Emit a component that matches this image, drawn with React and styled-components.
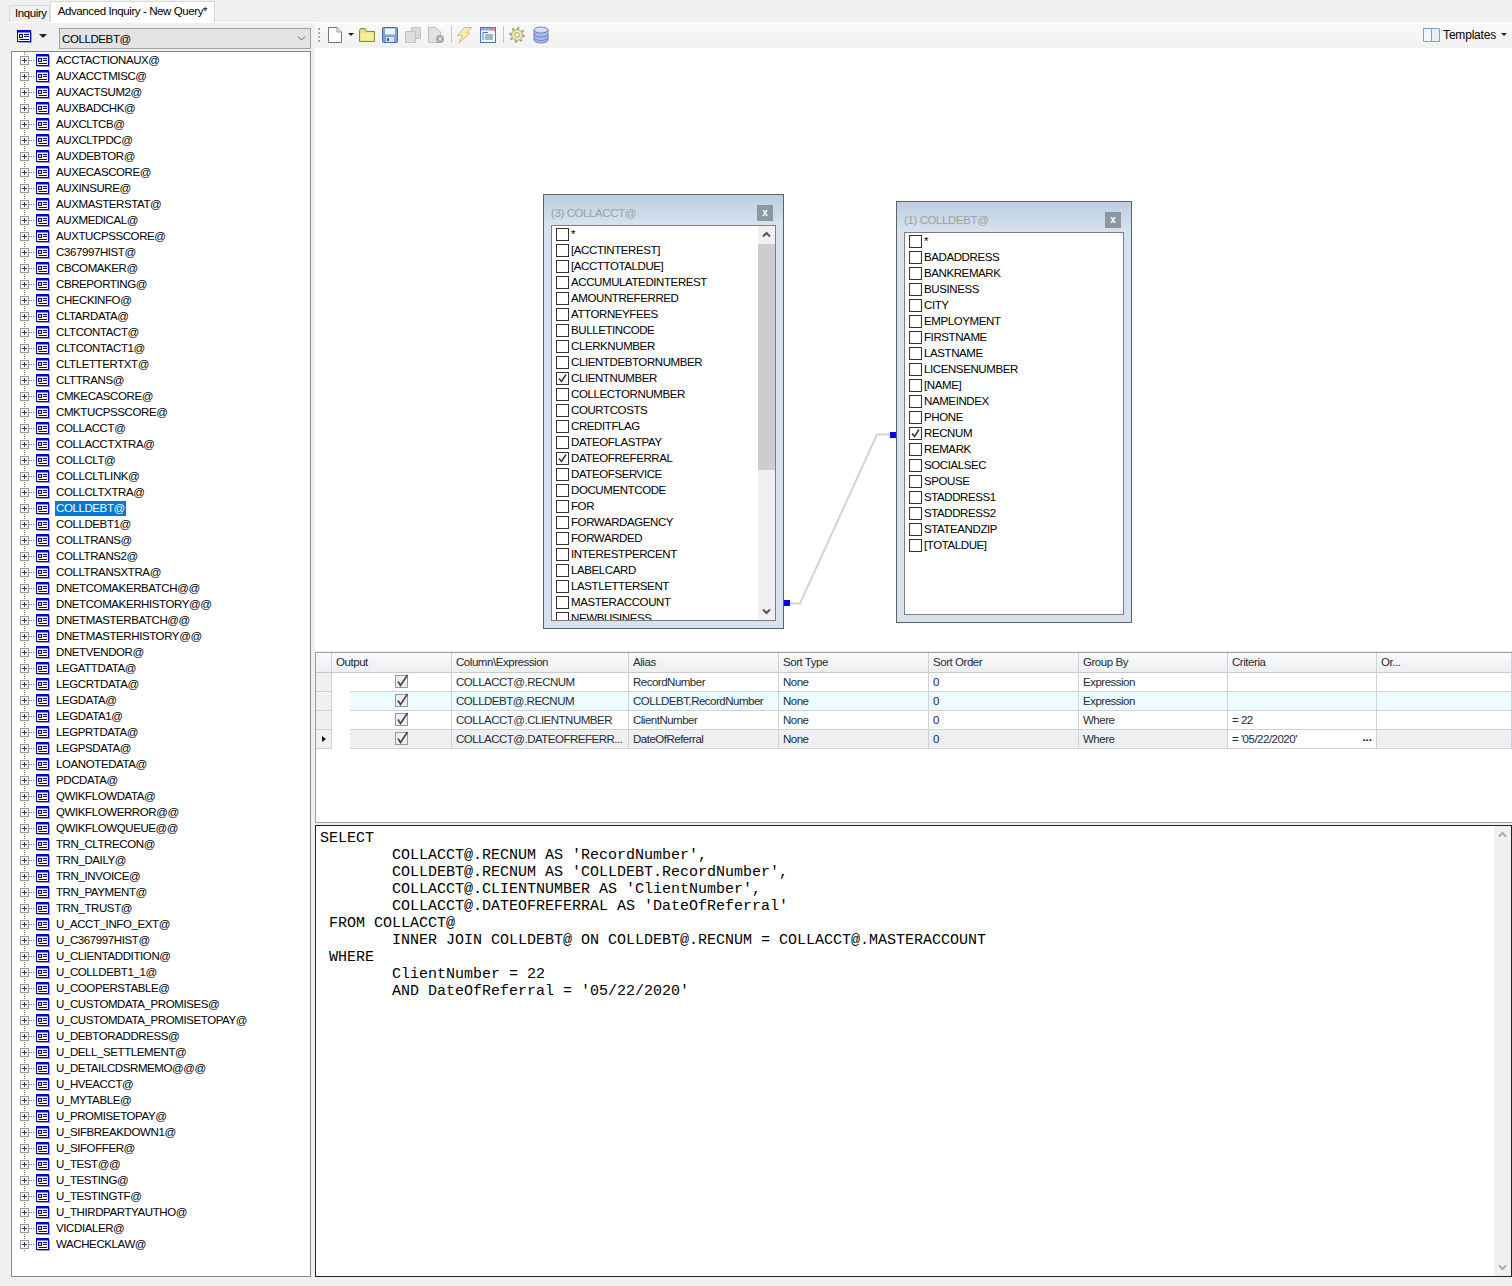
import styled, { createGlobalStyle } from 'styled-components';

const GlobalStyle = createGlobalStyle`
  html, body {
    margin: 0;
    padding: 0;
    background: #f0f0f0;
  }
  body {
    font-family: 'Liberation Sans', Arial, sans-serif;
    font-size: 11.5px;
    letter-spacing: -0.4px;
    color: #000;
  }
`;

const TABLES = [
  'ACCTACTIONAUX@', 'AUXACCTMISC@', 'AUXACTSUM2@', 'AUXBADCHK@', 'AUXCLTCB@', 'AUXCLTPDC@', 'AUXDEBTOR@',
  'AUXECASCORE@', 'AUXINSURE@', 'AUXMASTERSTAT@', 'AUXMEDICAL@', 'AUXTUCPSSCORE@', 'C367997HIST@', 'CBCOMAKER@',
  'CBREPORTING@', 'CHECKINFO@', 'CLTARDATA@', 'CLTCONTACT@', 'CLTCONTACT1@', 'CLTLETTERTXT@', 'CLTTRANS@',
  'CMKECASCORE@', 'CMKTUCPSSCORE@', 'COLLACCT@', 'COLLACCTXTRA@', 'COLLCLT@', 'COLLCLTLINK@', 'COLLCLTXTRA@',
  'COLLDEBT@', 'COLLDEBT1@', 'COLLTRANS@', 'COLLTRANS2@', 'COLLTRANSXTRA@', 'DNETCOMAKERBATCH@@',
  'DNETCOMAKERHISTORY@@', 'DNETMASTERBATCH@@', 'DNETMASTERHISTORY@@', 'DNETVENDOR@', 'LEGATTDATA@', 'LEGCRTDATA@',
  'LEGDATA@', 'LEGDATA1@', 'LEGPRTDATA@', 'LEGPSDATA@', 'LOANOTEDATA@', 'PDCDATA@', 'QWIKFLOWDATA@',
  'QWIKFLOWERROR@@', 'QWIKFLOWQUEUE@@', 'TRN_CLTRECON@', 'TRN_DAILY@', 'TRN_INVOICE@', 'TRN_PAYMENT@', 'TRN_TRUST@',
  'U_ACCT_INFO_EXT@', 'U_C367997HIST@', 'U_CLIENTADDITION@', 'U_COLLDEBT1_1@', 'U_COOPERSTABLE@',
  'U_CUSTOMDATA_PROMISES@', 'U_CUSTOMDATA_PROMISETOPAY@', 'U_DEBTORADDRESS@', 'U_DELL_SETTLEMENT@',
  'U_DETAILCDSRMEMO@@@', 'U_HVEACCT@', 'U_MYTABLE@', 'U_PROMISETOPAY@', 'U_SIFBREAKDOWN1@', 'U_SIFOFFER@',
  'U_TEST@@', 'U_TESTING@', 'U_TESTINGTF@', 'U_THIRDPARTYAUTHO@', 'VICDIALER@', 'WACHECKLAW@',
];

const ACCT_FIELDS = [
  '*', '[ACCTINTEREST]', '[ACCTTOTALDUE]', 'ACCUMULATEDINTEREST', 'AMOUNTREFERRED', 'ATTORNEYFEES', 'BULLETINCODE',
  'CLERKNUMBER', 'CLIENTDEBTORNUMBER', 'CLIENTNUMBER', 'COLLECTORNUMBER', 'COURTCOSTS', 'CREDITFLAG',
  'DATEOFLASTPAY', 'DATEOFREFERRAL', 'DATEOFSERVICE', 'DOCUMENTCODE', 'FOR', 'FORWARDAGENCY', 'FORWARDED',
  'INTERESTPERCENT', 'LABELCARD', 'LASTLETTERSENT', 'MASTERACCOUNT', 'NEWBUSINESS',
];

const DEBT_FIELDS = [
  '*', 'BADADDRESS', 'BANKREMARK', 'BUSINESS', 'CITY', 'EMPLOYMENT', 'FIRSTNAME', 'LASTNAME', 'LICENSENUMBER',
  '[NAME]', 'NAMEINDEX', 'PHONE', 'RECNUM', 'REMARK', 'SOCIALSEC', 'SPOUSE', 'STADDRESS1', 'STADDRESS2',
  'STATEANDZIP', '[TOTALDUE]',
];

const HEADERS = ['Column\\Expression', 'Alias', 'Sort Type', 'Sort Order', 'Group By', 'Criteria', 'Or...'];

const ROWS = [
  ['COLLACCT@.RECNUM', 'RecordNumber', 'None', '0', 'Expression', '', ''],
  ['COLLDEBT@.RECNUM', 'COLLDEBT.RecordNumber', 'None', '0', 'Expression', '', ''],
  ['COLLACCT@.CLIENTNUMBER', 'ClientNumber', 'None', '0', 'Where', '= 22', ''],
  ['COLLACCT@.DATEOFREFERR...', 'DateOfReferral', 'None', '0', 'Where', "= '05/22/2020'", ''],
];

const SQL = `SELECT
\tCOLLACCT@.RECNUM AS 'RecordNumber',
\tCOLLDEBT@.RECNUM AS 'COLLDEBT.RecordNumber',
\tCOLLACCT@.CLIENTNUMBER AS 'ClientNumber',
\tCOLLACCT@.DATEOFREFERRAL AS 'DateOfReferral'
 FROM COLLACCT@
\tINNER JOIN COLLDEBT@ ON COLLDEBT@.RECNUM = COLLACCT@.MASTERACCOUNT
 WHERE
\tClientNumber = 22
\tAND DateOfReferral = '05/22/2020'`;

const GRID_COLUMNS = '16px 18px 102px 177px 150px 150px 150px 149px 149px 1fr';

const Page = styled.div`
  width: 1512px;
  height: 1286px;
  overflow: hidden;
  display: flex;
  flex-direction: column;
  background: #f0f0f0;
`;

const TabStrip = styled.div`
  height: 22px;
  padding-left: 9px;
  display: flex;
  align-items: flex-end;
  flex-shrink: 0;
`;

const Tab = styled.div`
  box-sizing: border-box;
  height: ${(p) => (p.$active ? '21px' : '17px')};
  padding: ${(p) => (p.$active ? '3px 7px 0 7px' : '1px 2px 0 5px')};
  background: ${(p) => (p.$active ? '#fff' : '#f0f0f0')};
  border: 1px solid #d9d9d9;
  border-bottom: none;
  white-space: nowrap;
`;

const Body = styled.div`
  flex: 1;
  min-height: 0;
  margin-left: 8px;
  padding-bottom: 9px;
  display: flex;
  gap: 4px;
  border-top: 1px solid #fff;
`;

const LeftPane = styled.div`
  width: 303px;
  display: flex;
  flex-direction: column;
  flex-shrink: 0;
`;

const PickerRow = styled.div`
  height: 28px;
  padding: 3px 0 0 9px;
  box-sizing: border-box;
  display: flex;
  align-items: center;
`;

const PickerMenu = styled.div`
  margin-bottom: 5px;
  display: flex;
  align-items: center;
`;

const Combo = styled.div`
  flex: 1;
  height: 21px;
  margin-left: 12px;
  padding: 0 4px 0 2px;
  box-sizing: border-box;
  display: flex;
  align-items: center;
  justify-content: space-between;
  background: #e3e3e3;
  border: 1px solid #a0a0a0;
`;

const SmallArrow = styled.span`
  width: 0;
  height: 0;
  margin-left: ${(p) => p.$left || 0}px;
  border-left: ${(p) => p.$size || 4}px solid transparent;
  border-right: ${(p) => p.$size || 4}px solid transparent;
  border-top: ${(p) => p.$size || 4}px solid #222;
  flex-shrink: 0;
`;

const Tree = styled.div`
  flex: 1;
  min-height: 0;
  margin-left: 3px;
  box-sizing: border-box;
  background: #fff;
  border: 1px solid #828790;
  overflow: hidden;
`;

const TreeRow = styled.div`
  height: 16px;
  padding-left: 8px;
  display: flex;
  align-items: center;
`;

const TreeLabel = styled.span`
  margin-left: 5px;
  padding: 0 1px;
  height: 15px;
  line-height: 15px;
  color: ${(p) => (p.$selected ? '#fff' : '#000')};
  background: ${(p) => (p.$selected ? '#0078d7' : 'transparent')};
  white-space: nowrap;
`;

const RightPane = styled.div`
  flex: 1;
  min-width: 0;
  display: flex;
  flex-direction: column;
`;

const Toolbar = styled.div`
  height: 25px;
  flex-shrink: 0;
  padding: 0 0 2px 3px;
  box-sizing: border-box;
  display: flex;
  align-items: center;
  background: linear-gradient(to bottom, #fafafa, #f1f1f1);
`;

const ToolIcon = styled.svg`
  width: 16px;
  height: 18px;
  margin-left: ${(p) => p.$left ?? 7}px;
  flex-shrink: 0;
`;

const Grip = styled.span`
  width: 2px;
  height: 14px;
  background: repeating-linear-gradient(to bottom, #aaa 0 2px, transparent 2px 4px);
`;

const ToolSep = styled.span`
  width: 1px;
  height: 17px;
  margin-left: 7px;
  background: #c4c4c4;
`;

const TemplatesButton = styled.div`
  margin-left: auto;
  padding-right: 5px;
  display: flex;
  align-items: center;
  gap: 3px;
  font-size: 12px;
  letter-spacing: -0.2px;
`;

const Canvas = styled.div`
  position: relative;
  height: 603px;
  flex-shrink: 0;
  background: #fff;
`;

const QueryNode = styled.div`
  position: absolute;
  left: ${(p) => p.$x}px;
  top: ${(p) => p.$y}px;
  width: ${(p) => p.$w}px;
  height: ${(p) => p.$h}px;
  box-sizing: border-box;
  padding: 0 7px 7px 7px;
  display: flex;
  flex-direction: column;
  border: 1px solid #606060;
  background: linear-gradient(to bottom, #bccfe1 0, #d6e2ef 30px);
`;

const NodeTitle = styled.div`
  height: 30px;
  flex-shrink: 0;
  display: flex;
  align-items: center;
  justify-content: space-between;
  color: #a0a0a0;
  padding-top: 6px;
  box-sizing: border-box;
`;

const CloseButton = styled.span`
  width: 16px;
  height: 16px;
  margin-right: 3px;
  background: #8c97a3;
  color: #fff;
  font-size: 10px;
  font-weight: bold;
  line-height: 15px;
  letter-spacing: 0;
  text-align: center;
`;

const NodeList = styled.div`
  flex: 1;
  min-height: 0;
  display: flex;
  background: #fff;
  border: 1px solid #7d7d7d;
  overflow: hidden;
`;

const FieldColumn = styled.div`
  flex: 1;
  min-width: 0;
  padding-left: 4px;
  overflow: hidden;
`;

const FieldRow = styled.div`
  height: 16px;
  display: flex;
  align-items: center;
  white-space: nowrap;
`;

const FieldBox = styled.span`
  width: 13px;
  height: 13px;
  margin-right: 2px;
  box-sizing: border-box;
  flex-shrink: 0;
  border: 1px solid #333;
  background: #fff;
  display: flex;
`;

const ScrollBar = styled.div`
  width: 17px;
  flex-shrink: 0;
  display: flex;
  flex-direction: column;
  align-items: stretch;
  background: #f0f0f0;
`;

const ScrollButton = styled.span`
  height: 17px;
  flex-shrink: 0;
  display: flex;
  align-items: center;
  justify-content: center;
`;

const ScrollThumb = styled.span`
  height: 226px;
  margin-top: 1px;
  background: #cdcdcd;
`;

const ScrollSpacer = styled.span`
  flex: 1;
`;

const Links = styled.svg`
  position: absolute;
  left: 0;
  top: 0;
  width: 100%;
  height: 100%;
  pointer-events: none;
`;

const GridPanel = styled.div`
  height: 171px;
  margin-top: 1px;
  flex-shrink: 0;
  box-sizing: border-box;
  background: #fff;
  border: 1px solid #a0a0a0;
  border-right: none;
  overflow: hidden;
`;

const GridHeader = styled.div`
  display: grid;
  grid-template-columns: ${GRID_COLUMNS};
  height: 20px;
  background: linear-gradient(to bottom, #f9f9fa, #eeeff1);
  border-bottom: 1px solid #c8cad2;
  box-sizing: border-box;
`;

const HeaderCell = styled.div`
  grid-column: ${(p) => p.$span || 'auto'};
  padding-left: 4px;
  line-height: 18px;
  border-right: 1px solid #d0d2da;
  letter-spacing: -0.45px;
  white-space: nowrap;
  overflow: hidden;
  color: #222c3a;
`;

const GridRow = styled.div`
  display: grid;
  grid-template-columns: ${GRID_COLUMNS};
  height: 19px;
`;

const RowMarker = styled.div`
  background: #f0f0f2;
  border-right: 1px solid #d0d2da;
  border-bottom: 1px solid #d0d2da;
  display: flex;
  align-items: center;
  justify-content: center;
`;

const RowPointer = styled.span`
  border-top: 3px solid transparent;
  border-bottom: 3px solid transparent;
  border-left: 4px solid #111;
`;

const RowIndent = styled.div`
  background: #fff;
`;

const GridCell = styled.div`
  position: relative;
  box-sizing: border-box;
  padding-left: 4px;
  line-height: 18px;
  white-space: nowrap;
  overflow: hidden;
  letter-spacing: -0.5px;
  color: #222c3a;
  background: ${(p) => p.$bg};
  border-right: 1px solid #d0d2da;
  border-bottom: 1px solid #d0d2da;
`;

const OutputCell = styled(GridCell)`
  display: flex;
  align-items: center;
  justify-content: center;
  padding: 0 0 2px 2px;
`;

const Ellipsis = styled.span`
  position: absolute;
  right: 4px;
  top: -2px;
  font-weight: bold;
  letter-spacing: 0;
  color: #111;
`;

const SqlPanel = styled.div`
  flex: 1;
  min-height: 0;
  margin-top: 2px;
  box-sizing: border-box;
  display: flex;
  background: #fff;
  border: 1px solid #222;
`;

const SqlText = styled.pre`
  flex: 1;
  margin: 0;
  padding: 4px 0 0 4px;
  font-family: 'Liberation Mono', 'Courier New', monospace;
  font-size: 15px;
  line-height: 17px;
  letter-spacing: 0;
  tab-size: 8;
  overflow: hidden;
`;

const Chevron = ({ up, color = '#555', weight = 2 }) => (
  <svg width="9" height="7" viewBox="0 0 9 7">
    <path d={up ? 'M1 5.5 L4.5 2 L8 5.5' : 'M1 1.5 L4.5 5 L8 1.5'} fill="none" stroke={color} strokeWidth={weight} />
  </svg>
);

const TableIcon = () => (
  <svg width="14" height="13" viewBox="0 0 14 13" style={{ flexShrink: 0 }}>
    <rect x="0.5" y="0.5" width="12" height="11" fill="#fff" stroke="#0000d0" />
    <rect x="1" y="1" width="11" height="1.5" fill="#0000d0" />
    <rect x="2.5" y="4.5" width="3" height="3" fill="#f5f000" stroke="#000090" />
    <path d="M7 4.5H11M7 6.5H11M2.5 9.5H11" stroke="#000090" />
    <path d="M13.5 1.5V12.5H1.5" fill="none" stroke="#9a9ac8" />
  </svg>
);

const TreeGlyph = () => (
  <svg width="16" height="16" viewBox="0 0 16 16" style={{ flexShrink: 0 }}>
    <path d="M4.5 0V16" stroke="#777" strokeDasharray="1 1" />
    <path d="M9 8.5H15.5" stroke="#777" strokeDasharray="1 1" />
    <rect x="0.5" y="4.5" width="8" height="8" fill="#f4f4f4" stroke="#999" />
    <path d="M2 8.5H7M4.5 6V11" stroke="#2a3f78" />
  </svg>
);

const TickMark = () => (
  <svg width="11" height="11" viewBox="0 0 11 11">
    <path d="M2 5.5 L4.5 8.5 L9 1.5" fill="none" stroke="#333" strokeWidth="1.5" />
  </svg>
);

const OutputCheck = () => (
  <svg width="14" height="15" viewBox="0 0 14 15">
    <rect x="0.5" y="1.5" width="12" height="12" fill="#eee" stroke="#999" />
    <path d="M3 7.5 L5.5 11.5 L12.5 1" fill="none" stroke="#444" strokeWidth="1.6" />
  </svg>
);

const NewIcon = () => (
  <ToolIcon $left={7} viewBox="0 0 16 18">
    <path d="M1.5 1.5H10L14.5 6V16.5H1.5Z" fill="#fff" stroke="#777" />
    <path d="M10 1.5V6H14.5" fill="#e8e8e8" stroke="#999" />
  </ToolIcon>
);

const FolderIcon = () => (
  <ToolIcon $left={5} viewBox="0 0 16 18">
    <path d="M0.5 4.5V15.5H15.5V5.5H7.5L6 2.5H1.5Z" fill="#e4e070" stroke="#8d8a3a" />
    <rect x="1.5" y="6.5" width="13" height="8" fill="#f3ef9a" />
  </ToolIcon>
);

const SaveIcon = () => (
  <ToolIcon viewBox="0 0 16 18">
    <rect x="0.5" y="1.5" width="15" height="15" rx="1" fill="#7ea3d2" stroke="#3f6ba6" />
    <rect x="3" y="2.5" width="10" height="6" fill="#eef3f9" />
    <rect x="4" y="11" width="8" height="5" fill="#dce3ec" />
    <rect x="5" y="12" width="2" height="3" fill="#3f5f8f" />
  </ToolIcon>
);

const CopyIcon = () => (
  <ToolIcon viewBox="0 0 16 18">
    <path d="M6.5 1.5H15.5V12.5H6.5Z" fill="#d9d9d9" stroke="#c4c4c4" />
    <path d="M0.5 5.5H10.5V16.5H0.5Z" fill="#dedede" stroke="#c4c4c4" />
  </ToolIcon>
);

const DeleteIcon = () => (
  <ToolIcon viewBox="0 0 16 18">
    <path d="M0.5 1.5H8L12.5 6V16.5H0.5Z" fill="#e2e2e2" stroke="#bbb" />
    <circle cx="12" cy="13" r="4" fill="#a8a8a8" />
    <path d="M10.2 11.2L13.8 14.8M13.8 11.2L10.2 14.8" stroke="#eee" />
  </ToolIcon>
);

const BoltIcon = () => (
  <ToolIcon $left={4} viewBox="0 0 16 18">
    <path d="M8 1.5H15.5L10.5 7H14L3 17L6.5 9.5H1.5Z" fill="#f6ecb0" stroke="#cfc27a" />
  </ToolIcon>
);

const FormIcon = () => (
  <ToolIcon $left={8} viewBox="0 0 16 18">
    <rect x="0.5" y="1.5" width="15" height="15" fill="#f4f7fc" stroke="#4d74b8" />
    <rect x="1" y="2" width="14" height="2.5" fill="#8eaadb" />
    <rect x="11.5" y="1.5" width="3.5" height="3" fill="#e57f8f" />
    <path d="M3 6.5H8M5 9H13M5 11H13M5 13H13M3 6.5V14" stroke="#4d74b8" />
  </ToolIcon>
);

const GearIcon = () => (
  <ToolIcon $left={5} viewBox="0 0 16 18">
    <circle cx="8" cy="9" r="5.5" fill="#ecebaa" stroke="#a5a36a" />
    <circle cx="8" cy="9" r="7" fill="none" stroke="#a5a36a" strokeWidth="1.8" strokeDasharray="2.2 3.3" />
    <circle cx="8" cy="9" r="2.3" fill="#fff" stroke="#a5a36a" />
  </ToolIcon>
);

const DatabaseIcon = () => (
  <ToolIcon $left={8} viewBox="0 0 16 18">
    <path d="M1 4V14C1 15.7 4 17 8 17S15 15.7 15 14V4Z" fill="#a7b9e8" stroke="#6f86c4" />
    <ellipse cx="8" cy="4" rx="7" ry="3" fill="#d3ddf6" stroke="#6f86c4" />
    <path d="M1 8C1 9.7 4 11 8 11S15 9.7 15 8M1 11.5C1 13.2 4 14.5 8 14.5S15 13.2 15 11.5" fill="none" stroke="#6f86c4" />
  </ToolIcon>
);

const BookIcon = () => (
  <svg width="17" height="15" viewBox="0 0 17 15">
    <path d="M0.5 1.5H8.5V14.5H0.5Z" fill="#f2f5fa" stroke="#7f9fcf" />
    <path d="M8.5 1.5H16.5V14.5H8.5Z" fill="#e9edf4" stroke="#7f9fcf" />
  </svg>
);

const ListIcon = () => (
  <svg width="15" height="13" viewBox="0 0 15 13" style={{ flexShrink: 0 }}>
    <rect x="0.5" y="0.5" width="13" height="11" fill="#fff" stroke="#0000d0" />
    <rect x="1" y="1" width="12" height="1.5" fill="#0000d0" />
    <rect x="2.5" y="4.5" width="3" height="3" fill="#f5f000" stroke="#000090" />
    <path d="M7 4.5H12M7 6.5H12M2.5 9.5H12" stroke="#000090" />
    <path d="M14.5 1.5V12.5H1.5" fill="none" stroke="#9a9ac8" />
  </svg>
);

const FieldList = ({ fields, checked, scroll }) => (
  <NodeList>
    <FieldColumn>
      {fields.map((name) => (
        <FieldRow key={name}>
          <FieldBox>{checked.includes(name) && <TickMark />}</FieldBox>
          {name}
        </FieldRow>
      ))}
    </FieldColumn>
    {scroll && (
      <ScrollBar>
        <ScrollButton><Chevron up /></ScrollButton>
        <ScrollThumb />
        <ScrollSpacer />
        <ScrollButton><Chevron /></ScrollButton>
      </ScrollBar>
    )}
  </NodeList>
);

const rowBackground = (index, col) => {
  if (index === 1) return '#ecfdff';
  if (index === 3 && col !== 5) return '#eeeff1';
  return '#fff';
};

const App = () => (
  <Page>
    <GlobalStyle />
    <TabStrip>
      <Tab>Inquiry</Tab>
      <Tab $active>Advanced Inquiry - New Query*</Tab>
    </TabStrip>
    <Body>
      <LeftPane>
        <PickerRow>
          <PickerMenu>
            <ListIcon />
            <SmallArrow $left={7} />
          </PickerMenu>
          <Combo>
            COLLDEBT@
            <Chevron color="#666" weight={1} />
          </Combo>
        </PickerRow>
        <Tree>
          {TABLES.map((name) => (
            <TreeRow key={name}>
              <TreeGlyph />
              <TableIcon />
              <TreeLabel $selected={name === 'COLLDEBT@'}>{name}</TreeLabel>
            </TreeRow>
          ))}
        </Tree>
      </LeftPane>
      <RightPane>
        <Toolbar>
          <Grip />
          <NewIcon />
          <SmallArrow $left={5} $size={3} />
          <FolderIcon />
          <SaveIcon />
          <CopyIcon />
          <DeleteIcon />
          <ToolSep />
          <BoltIcon />
          <FormIcon />
          <ToolSep />
          <GearIcon />
          <DatabaseIcon />
          <TemplatesButton>
            <BookIcon />
            Templates
            <SmallArrow $left={2} $size={3} />
          </TemplatesButton>
        </Toolbar>
        <Canvas>
          <QueryNode $x={228} $y={146} $w={241} $h={435}>
            <NodeTitle>
              (3) COLLACCT@
              <CloseButton>x</CloseButton>
            </NodeTitle>
            <FieldList fields={ACCT_FIELDS} checked={['CLIENTNUMBER', 'DATEOFREFERRAL']} scroll />
          </QueryNode>
          <QueryNode $x={581} $y={153} $w={236} $h={422}>
            <NodeTitle>
              (1) COLLDEBT@
              <CloseButton>x</CloseButton>
            </NodeTitle>
            <FieldList fields={DEBT_FIELDS} checked={['RECNUM']} />
          </QueryNode>
          <Links>
            <polyline points="475,555.5 485,555.5 562,386.5 575,386.5" fill="none" stroke="#d4d4d4" strokeWidth="2" />
            <rect x="469" y="552" width="6" height="6" fill="#0000ff" />
            <rect x="575" y="384" width="6" height="6" fill="#0000ff" />
          </Links>
        </Canvas>
        <GridPanel>
          <GridHeader>
            <HeaderCell />
            <HeaderCell $span="span 2">Output</HeaderCell>
            {HEADERS.map((title) => (
              <HeaderCell key={title}>{title}</HeaderCell>
            ))}
          </GridHeader>
          {ROWS.map((row, index) => (
            <GridRow key={row[0]}>
              <RowMarker>{index === 3 && <RowPointer />}</RowMarker>
              <RowIndent />
              <OutputCell $bg={rowBackground(index, 0)}>
                <OutputCheck />
              </OutputCell>
              {row.map((value, col) => (
                <GridCell key={col} $bg={rowBackground(index, col)}>
                  {value}
                  {index === 3 && col === 5 && <Ellipsis>...</Ellipsis>}
                </GridCell>
              ))}
            </GridRow>
          ))}
        </GridPanel>
        <SqlPanel>
          <SqlText>{SQL}</SqlText>
          <ScrollBar>
            <ScrollButton><Chevron up color="#aaa" /></ScrollButton>
            <ScrollSpacer />
            <ScrollButton><Chevron color="#aaa" /></ScrollButton>
          </ScrollBar>
        </SqlPanel>
      </RightPane>
    </Body>
  </Page>
);

export default App;
